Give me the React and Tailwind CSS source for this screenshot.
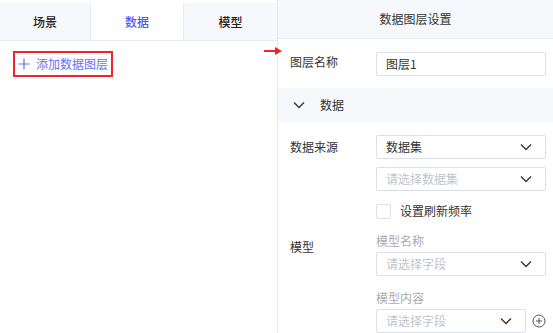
import React from "react";

const font = { fontFamily: '"Noto Sans CJK SC", "Noto Sans", sans-serif' };

function Chevron({ className = "" }) {
  return (
    <svg width="12" height="8" viewBox="0 0 12 8" className={className} fill="none">
      <path d="M1 1.5 L6 6.5 L11 1.5" stroke="#333" strokeWidth="1.3" />
    </svg>
  );
}

function Select({ text, placeholder, className = "" }) {
  return (
    <div className={`h-[24px] border border-[#dcdfe6] rounded-[2px] flex items-center justify-between pl-[9px] pr-[13px] bg-white ${className}`}>
      <span className={`text-[12px] leading-none ${placeholder ? "text-[#c0c4cc]" : "text-[#333]"}`}>{text}</span>
      <Chevron />
    </div>
  );
}

export default function App() {
  return (
    <div className="w-[553px] h-[333px] flex bg-white overflow-hidden text-[#333]" style={font}>
      {/* left panel */}
      <div className="w-[278px] shrink-0 border-r border-[#e4e7ed] flex flex-col pt-[3px]">
        <div className="h-[38px] flex border-b border-[#e9edf3]">
          <div className="w-[91px] bg-[#f6f8fb] border-r border-[#e9edf3] flex items-center justify-center text-[12px] font-medium text-[#222]">场景</div>
          <div className="w-[93px] bg-white border-r border-[#e9edf3] flex items-center justify-center text-[12px] font-medium text-[#4d5cf4]">数据</div>
          <div className="flex-1 bg-[#f6f8fb] flex items-center justify-center text-[12px] font-medium text-[#222]">模型</div>
        </div>
        <div className="pl-[13px] pt-[10px]">
          <div className="w-[100px] h-[26px] border-2 border-[#f5222d] flex items-center pl-[3px] gap-[6px] text-[#6471f5]">
            <svg width="12" height="12" viewBox="0 0 12 12" fill="none">
              <path d="M6 0.5 V11.5 M0.5 6 H11.5" stroke="#6471f5" strokeWidth="1.2" />
            </svg>
            <span className="text-[12px] leading-none">添加数据图层</span>
          </div>
        </div>
      </div>

      {/* right panel */}
      <div className="flex-1 relative flex flex-col">
        <svg className="absolute left-[-14px] top-[46px]" width="20" height="10" viewBox="0 0 20 10">
          <path d="M0 5 H13" stroke="#f5222d" strokeWidth="2" />
          <path d="M11 1 L18 5 L11 9 Z" fill="#f5222d" />
        </svg>
        <div className="h-[41px] bg-[#f6f8fb] border-b border-[#e9edf3] flex items-center justify-center text-[12px] text-[#333]">数据图层设置</div>

        <div className="flex items-start mt-[13px] pl-[12px] pr-[7px]">
          <div className="w-[86px] text-[12px] leading-[16px] pt-[2px]">图层名称</div>
          <div className="flex-1 h-[24px] border border-[#dcdfe6] rounded-[2px] flex items-center pl-[9px] text-[12px]">图层1</div>
        </div>

        <div className="h-[35px] mt-[12px] bg-[#f6f8fb] flex items-center pl-[15px] gap-[15px]">
          <Chevron />
          <span className="text-[12px]">数据</span>
        </div>

        <div className="flex items-start mt-[13px] pl-[12px] pr-[7px]">
          <div className="w-[86px] text-[12px] leading-[16px] pt-[4px]">数据来源</div>
          <div className="flex-1 flex flex-col">
            <Select text="数据集" />
            <Select text="请选择数据集" placeholder className="mt-[8px]" />
            <div className="flex items-center mt-[11px] gap-[9px]">
              <div className="w-[15px] h-[15px] border border-[#dcdfe6] rounded-[2px] bg-white" />
              <span className="text-[12px]">设置刷新频率</span>
            </div>
          </div>
        </div>

        <div className="flex items-start mt-[13px] pl-[12px] pr-[7px]">
          <div className="w-[86px] text-[12px] leading-[16px] pt-[6px]">模型</div>
          <div className="flex-1 flex flex-col">
            <div className="text-[12px] leading-[16px] text-[#a8abb2]">模型名称</div>
            <Select text="请选择字段" placeholder className="mt-[3px]" />
            <div className="text-[12px] leading-[16px] text-[#a8abb2] mt-[14px]">模型内容</div>
            <div className="flex items-center mt-[3px]">
              <Select text="请选择字段" placeholder className="w-[150px]" />
              <svg className="ml-[6px]" width="14" height="14" viewBox="0 0 14 14" fill="none">
                <circle cx="7" cy="7" r="6" stroke="#555" strokeWidth="1" />
                <path d="M7 4 V10 M4 7 H10" stroke="#555" strokeWidth="1" />
              </svg>
            </div>
          </div>
        </div>
      </div>
    </div>
  );
}
